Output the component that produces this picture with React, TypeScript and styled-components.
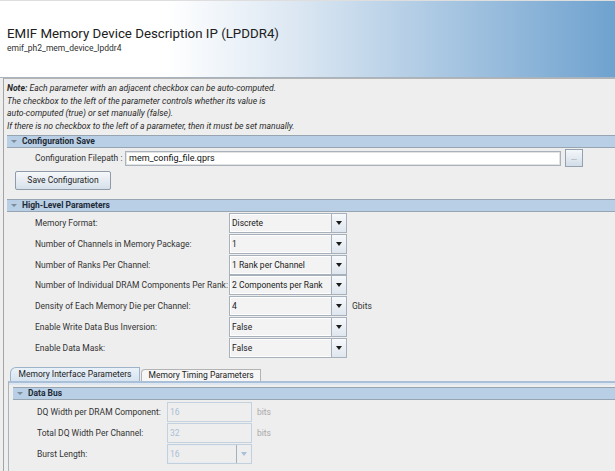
import React from 'react';
import styled, { createGlobalStyle } from 'styled-components';

const GlobalStyle = createGlobalStyle`
  html, body {
    margin: 0;
    padding: 0;
    background: #eeeeee;
  }
  body {
    font-family: Roboto, "Liberation Sans", sans-serif;
    color: #2a2a2a;
    overflow: hidden;
  }
`;

const Page = styled.div`
  width: 615px;
  height: 471px;
  overflow: hidden;
  display: flex;
  flex-direction: column;
`;

const Header = styled.header`
  height: 78px;
  box-sizing: border-box;
  flex-shrink: 0;
  padding: 24px 0 0 7px;
  border-top: 1px solid #dedede;
  border-bottom: 1px solid #a7b3bf;
  background: linear-gradient(
    to right,
    #ffffff 0%,
    #ffffff 27%,
    #dae6f2 49%,
    #6fa2cf 100%
  );
`;

const Title = styled.h1`
  margin: 0;
  font-size: 13.3px;
  font-weight: 400;
  line-height: 17px;
  color: #202020;
`;

const Subtitle = styled.div`
  font-size: 8.5px;
  line-height: 12px;
  color: #303030;
`;

const Body = styled.div`
  flex: 1;
  margin-left: 3px;
  border-left: 1px solid #a4a4a4;
  border-top: 1px solid #b4b4b4;
  display: flex;
  flex-direction: column;
`;

const Note = styled.p`
  margin: 0;
  padding: 3px 0 0 3px;
  font-size: 8.6px;
  font-style: italic;
  line-height: 12.7px;
  color: #2a2a2a;

  b {
    font-weight: 700;
  }
`;

const SectionBar = styled.div<{ $left?: number; $top?: number }>`
  margin-left: ${(p) => p.$left ?? 3}px;
  margin-top: ${(p) => p.$top ?? 0}px;
  height: 13px;
  box-sizing: border-box;
  display: flex;
  align-items: center;
  gap: 5px;
  padding-left: 4px;
  background: #b8cfe6;
  border-top: 1px solid #97a5b3;
  border-bottom: 1px solid #97a5b3;
  font-size: 8.5px;
  font-weight: 700;
  color: #1e2a36;
`;

const Caret = styled.span`
  width: 0;
  height: 0;
  border-left: 3px solid transparent;
  border-right: 3px solid transparent;
  border-top: 3px solid #7d8a97;
`;

const FileRow = styled.div`
  display: flex;
  align-items: center;
  height: 19px;
  margin-top: 1px;
  padding-left: 31px;
  font-size: 8.5px;
`;

const FileLabel = styled.span`
  width: 90px;
  color: #333;
`;

const FileInput = styled.div`
  width: 436px;
  height: 15px;
  box-sizing: border-box;
  background: #ffffff;
  border: 1px solid #a9b2bb;
  box-shadow: inset 0 0 0 1px #e3e3e3;
  display: flex;
  align-items: center;
  padding-left: 3px;
  font-size: 9px;
  color: #111;
`;

const DotsButton = styled.div`
  width: 18px;
  height: 18px;
  box-sizing: border-box;
  margin-left: 4px;
  border: 1px solid #94a1ae;
  background: linear-gradient(#f4f7fa, #d2dde8);
  display: flex;
  align-items: center;
  justify-content: center;
  font-size: 7px;
  color: #667;
`;

const SaveButton = styled.div`
  margin: 3px 0 0 11px;
  width: 96px;
  height: 19px;
  box-sizing: border-box;
  border: 1px solid #8f9ba8;
  border-radius: 2px;
  background: linear-gradient(#f6f8fa, #d6e0ea);
  display: flex;
  align-items: center;
  justify-content: center;
  font-size: 8.5px;
  color: #1e1e1e;
`;

const ParamList = styled.div<{ $top: number }>`
  display: flex;
  flex-direction: column;
  gap: 0.85px;
  padding-top: ${(p) => p.$top}px;
`;

const ParamRow = styled.div<{ $indent: number; $labelWidth: number }>`
  display: flex;
  align-items: center;
  height: 20px;
  padding-left: ${(p) => p.$indent}px;
  font-size: 8.5px;

  > span:first-child {
    width: ${(p) => p.$labelWidth}px;
    color: #333;
    white-space: nowrap;
  }
`;

const Unit = styled.span<{ $disabled?: boolean }>`
  margin-left: 5px;
  color: ${(p) => (p.$disabled ? '#a9a9a9' : '#333')};
`;

const ComboBox = styled.div<{ $w: number; $disabled?: boolean }>`
  width: ${(p) => p.$w}px;
  height: 20px;
  box-sizing: border-box;
  display: flex;
  border: 1px solid ${(p) => (p.$disabled ? '#c2d0de' : '#a6b1bc')};
  background: ${(p) => (p.$disabled ? '#eeeeee' : '#f3f3f3')};
  box-shadow: ${(p) => (p.$disabled ? 'inset 0 0 0 1px #e6ecf2' : 'inset 0 0 0 1px #ffffff')};
`;

const ComboText = styled.span<{ $disabled?: boolean }>`
  flex: 1;
  display: flex;
  align-items: center;
  padding-left: 2px;
  color: ${(p) => (p.$disabled ? '#a8bfd6' : '#222')};
`;

const ComboArrow = styled.span<{ $disabled?: boolean }>`
  width: 14px;
  display: flex;
  align-items: center;
  justify-content: center;
  border-left: 1px solid ${(p) => (p.$disabled ? '#a4b0bc' : '#a6b1bc')};
  background: ${(p) =>
    p.$disabled ? '#eeeeee' : 'linear-gradient(#f7f9fb, #dfe6ee)'};

  &::after {
    content: '';
    width: 0;
    height: 0;
    border-left: 3.5px solid transparent;
    border-right: 3.5px solid transparent;
    border-top: 4px solid ${(p) => (p.$disabled ? '#a8c0d8' : '#1a1a1a')};
  }
`;

const TextField = styled.div<{ $w: number }>`
  width: ${(p) => p.$w}px;
  height: 20px;
  box-sizing: border-box;
  border: 1px solid #c4d2e0;
  display: flex;
  align-items: center;
  padding-left: 2px;
  color: #a8bfd6;
`;

const TabArea = styled.div`
  margin: 9px 0 0 4px;
  flex: 1;
  display: flex;
  flex-direction: column;
`;

const TabStrip = styled.div`
  display: flex;
  align-items: flex-end;
  padding-left: 2px;
  height: 14px;
`;

const Tab = styled.div<{ $active?: boolean }>`
  height: ${(p) => (p.$active ? 14 : 12)}px;
  box-sizing: border-box;
  padding: 0 ${(p) => (p.$active ? 7.5 : 6.5)}px;
  margin-right: 1px;
  display: flex;
  align-items: center;
  font-size: 8.5px;
  color: #222;
  border: 1px solid ${(p) => (p.$active ? '#9db3ca' : '#b3b3b3')};
  border-bottom: none;
  border-top-left-radius: ${(p) => (p.$active ? 6 : 4)}px;
  background: ${(p) =>
    p.$active ? 'linear-gradient(#eaf1f8, #d6e3f0)' : '#f6f6f6'};
`;

const TabPanel = styled.div`
  flex: 1;
  border-left: 1px solid #a9b4bf;
  border-top: 2px solid #a9c0d8;
  padding-top: 4px;
  box-shadow: inset 0 2px 0 #dde7f1;
`;

type Param = { label: string; value: string; unit?: string };

const highLevel: Param[] = [
  { label: 'Memory Format:', value: 'Discrete' },
  { label: 'Number of Channels in Memory Package:', value: '1' },
  { label: 'Number of Ranks Per Channel:', value: '1 Rank per Channel' },
  {
    label: 'Number of Individual DRAM Components Per Rank:',
    value: '2 Components per Rank',
  },
  { label: 'Density of Each Memory Die per Channel:', value: '4', unit: 'Gbits' },
  { label: 'Enable Write Data Bus Inversion:', value: 'False' },
  { label: 'Enable Data Mask:', value: 'False' },
];

export default function App() {
  return (
    <Page>
      <GlobalStyle />
      <Header>
        <Title>EMIF Memory Device Description IP (LPDDR4)</Title>
        <Subtitle>emif_ph2_mem_device_lpddr4</Subtitle>
      </Header>
      <Body>
        <Note>
          <b>Note:</b> Each parameter with an adjacent checkbox can be auto-computed.
          <br />
          The checkbox to the left of the parameter controls whether its value is
          <br />
          auto-computed (true) or set manually (false).
          <br />
          If there is no checkbox to the left of a parameter, then it must be set manually.
        </Note>

        <SectionBar $top={2}>
          <Caret />
          Configuration Save
        </SectionBar>
        <FileRow>
          <FileLabel>Configuration Filepath :</FileLabel>
          <FileInput>mem_config_file.qprs</FileInput>
          <DotsButton>...</DotsButton>
        </FileRow>
        <SaveButton>Save Configuration</SaveButton>

        <SectionBar $top={9}>
          <Caret />
          High-Level Parameters
        </SectionBar>
        <ParamList $top={1}>
          {highLevel.map((p) => (
            <ParamRow key={p.label} $indent={31} $labelWidth={194}>
              <span>{p.label}</span>
              <ComboBox $w={118}>
                <ComboText>{p.value}</ComboText>
                <ComboArrow />
              </ComboBox>
              {p.unit && <Unit>{p.unit}</Unit>}
            </ParamRow>
          ))}
        </ParamList>

        <TabArea>
          <TabStrip>
            <Tab $active>Memory Interface Parameters</Tab>
            <Tab>Memory Timing Parameters</Tab>
          </TabStrip>
          <TabPanel>
            <SectionBar $left={4}>
              <Caret />
              Data Bus
            </SectionBar>
            <ParamList $top={2}>
              <ParamRow $indent={28} $labelWidth={130}>
                <span>DQ Width per DRAM Component:</span>
                <TextField $w={85}>16</TextField>
                <Unit $disabled>bits</Unit>
              </ParamRow>
              <ParamRow $indent={28} $labelWidth={130}>
                <span>Total DQ Width Per Channel:</span>
                <TextField $w={85}>32</TextField>
                <Unit $disabled>bits</Unit>
              </ParamRow>
              <ParamRow $indent={28} $labelWidth={130}>
                <span>Burst Length:</span>
                <ComboBox $w={85} $disabled>
                  <ComboText $disabled>16</ComboText>
                  <ComboArrow $disabled />
                </ComboBox>
              </ParamRow>
            </ParamList>
          </TabPanel>
        </TabArea>
      </Body>
    </Page>
  );
}
